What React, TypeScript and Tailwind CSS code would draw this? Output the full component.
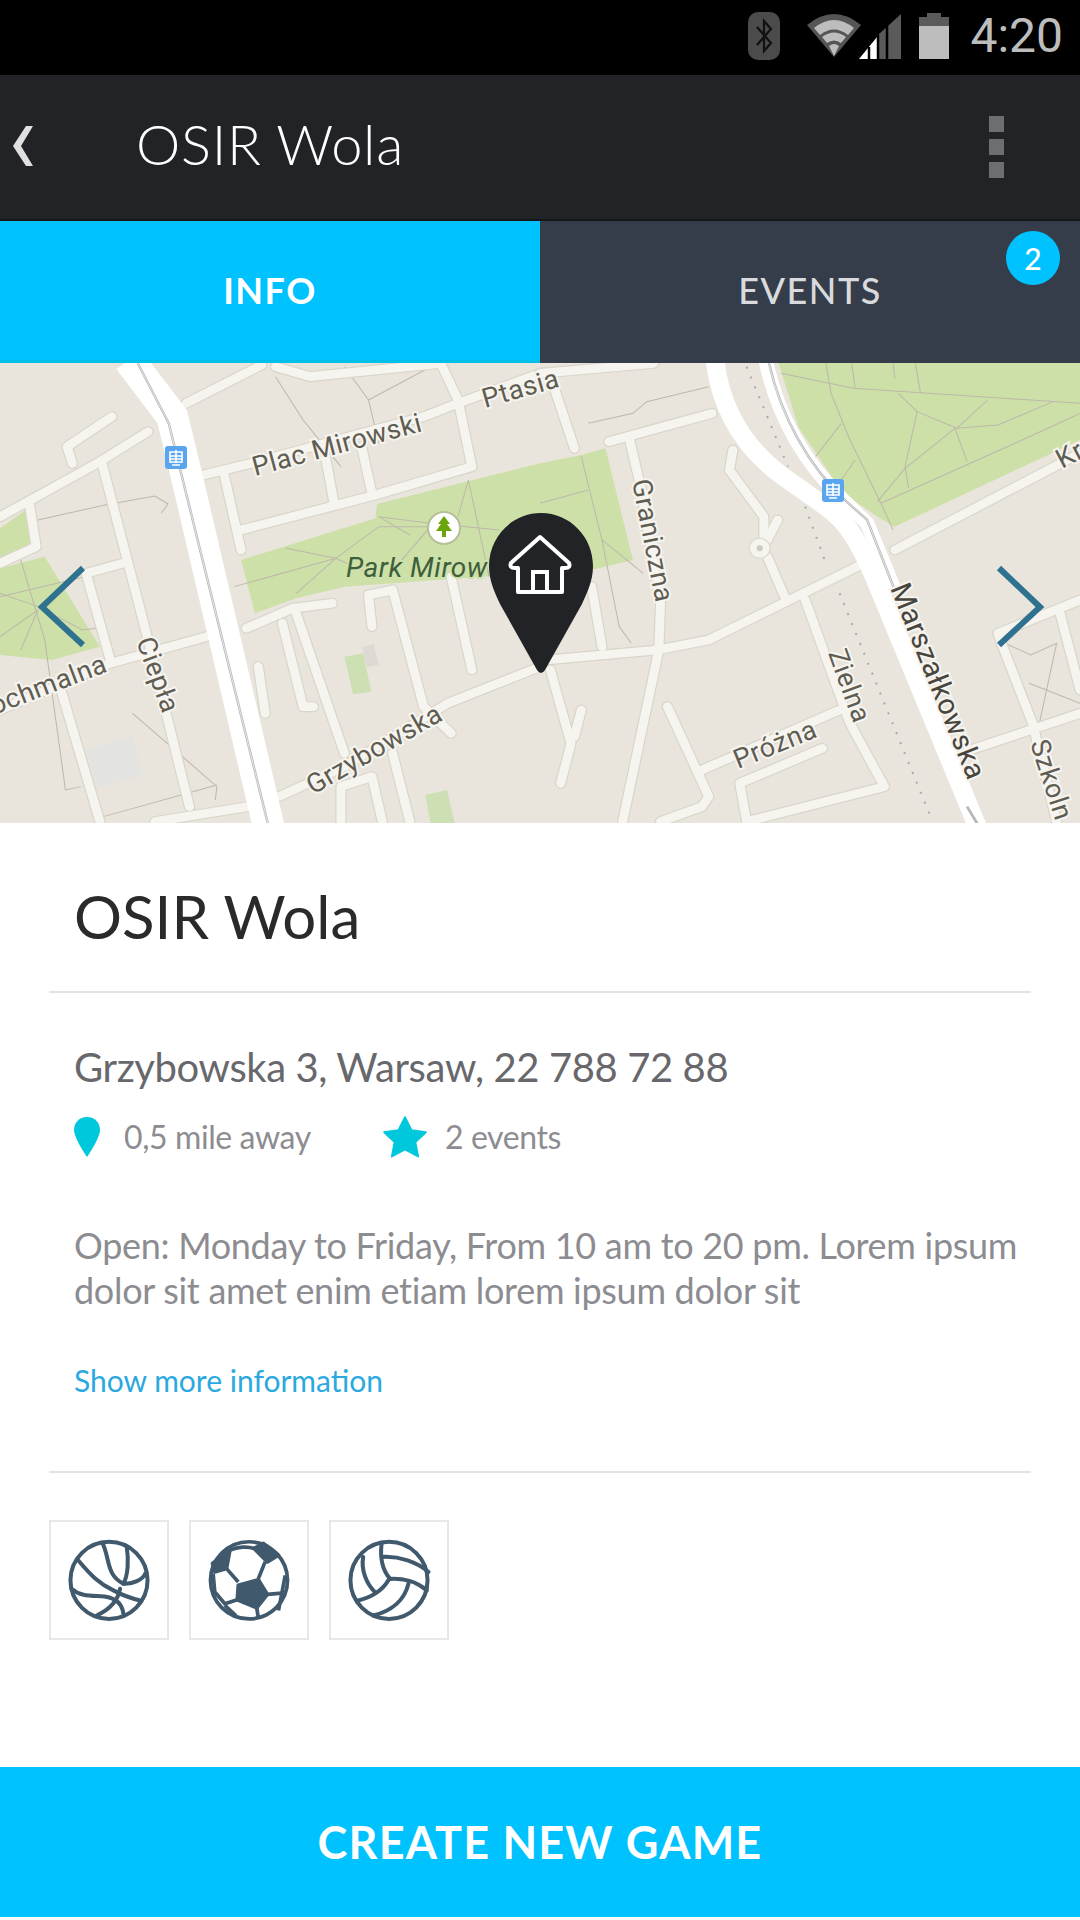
const ROADS_LEFT = [
  "M0 470 L80 425 L290 305 L430 215",
  "M210 310 L195 260 L325 170",
  "M85 430 L105 560 L0 610",
  "M295 305 L420 800 L550 1340",
  "M355 610 L250 640 L320 900",
  "M0 1050 L320 910 L600 830",
  "M180 1000 L290 1385",
  "M540 130 L760 15",
  "M590 345 L730 310 L1230 170 L1330 130 L1568 40",
  "M650 340 L700 570",
  "M700 510 L1090 405 L1370 320 L1330 120 L1280 10",
  "M945 290 L970 430",
  "M1050 260 L1080 400",
  "M715 805 L850 745 L965 730",
  "M820 790 L880 1040 L910 1040",
  "M860 760 L1000 1180",
  "M1080 800 L1070 705 L1140 690 L1230 1040 L1310 1120",
  "M810 1310 L1000 1220 L1300 1030 L1568 920",
  "M750 920 L770 1060",
  "M1140 1180 L1190 1385",
  "M990 1385 L990 1280 L1080 1250 L1110 1385",
  "M450 1385 L720 1340",
  "M1310 650 L1370 930",
  "M800 20 L900 50 L1280 10",
];

const ROADS_RIGHT = [
  "M1030 570 L1568 280",
  "M20 900 L340 870 L490 840 L940 610",
  "M260 240 L290 370 L350 730 L345 870 L240 1385",
  "M200 245 L500 160",
  "M40 80 L100 265",
  "M0 40 L330 10",
  "M560 270 L550 330 L650 470 L650 560",
  "M660 590 L710 710",
  "M690 480 L660 540",
  "M770 720 L900 1090 L1000 1280 L600 1385 L580 1270 L820 1165",
  "M470 1230 L870 1050",
  "M370 1040 L490 1310 L470 1340 L350 1385",
  "M30 930 L90 1150 L60 1270",
  "M120 1050 L100 1130",
  "M1340 850 L1330 820 L1568 720",
  "M1340 850 L1430 1090 L1500 1385",
  "M1250 1170 L1568 1060",
  "M1510 760 L1568 990",
  "M150 680 L180 860",
];

const PATHS_LEFT = [
  "M110 480 L305 435 L450 408 L488 432 L468 460",
  "M0 700 L110 740 L240 810 L280 805",
  "M60 600 L130 840 L190 1290 L235 1280",
  "M0 830 L110 750 L60 870",
  "M0 710 L245 650",
  "M680 680 L975 595 L1100 500 L1240 500",
  "M830 565 L975 595 L1090 650",
  "M860 700 L975 595",
  "M1100 470 L1190 525",
  "M1100 470 L1250 490 L1450 510",
  "M1250 500 L1150 620",
  "M1360 360 L1330 470",
  "M1360 360 L1420 650",
  "M800 50 L880 180 L990 320",
  "M1000 20 L1070 120 L1100 250",
  "M1070 120 L1270 10",
  "M385 1060 L630 1280 L625 1320",
  "M300 1370 L630 1275",
];

const PATHS_RIGHT = [
  "M700 40 L910 85 L1568 130",
  "M845 100 L900 240 L990 430 L1025 510",
  "M830 10 L845 100",
  "M905 10 L915 85",
  "M1025 10 L1030 55",
  "M1090 10 L1105 100",
  "M1040 100 L1095 155 L1210 205 L1330 195 L1490 125",
  "M1095 155 L1060 320 L1070 385",
  "M1205 205 L1060 325 L980 425",
  "M1205 205 L1240 305",
  "M990 430 L1400 240 L1568 160",
  "M875 190 L800 290",
  "M915 300 L875 360",
  "M1300 120 L1210 205",
  "M140 190 L270 160 L310 125 L490 80",
  "M120 290 L180 540 L230 800 L265 850",
  "M0 430 L140 390",
  "M180 540 L300 640",
  "M1350 850 L1425 885 L1500 850 L1450 1090",
  "M1420 970 L1568 1030",
];

function MapTile() {
  const halo = { paintOrder: "stroke" as const };
  return (
    <svg viewBox="0 0 1080 460" className="block w-full h-[460px] bg-[#e9e5dc]">
      {/* left half, coords are from a 2.9x crop */}
      <g transform="scale(0.3444 0.3333) translate(0 -9)">
        <path d="M0 505 L75 450 L105 560 L0 600 Z M0 625 L130 590 L290 860 L150 900 L0 885 Z" fill="#cde0a8" />
        <path d="M700 600 L1090 475 L1095 432 L1568 310 L1568 640 L1400 650 L1000 680 L860 715 L740 760 Z" fill="#cde0a8" />
        <path d="M1000 890 L1055 880 L1078 995 L1025 1003 Z M1235 1305 L1298 1290 L1320 1390 L1250 1390 Z" fill="#cde0b4" />
        <path d="M1052 860 L1085 852 L1100 915 L1065 922 Z" fill="#dedad3" />
        <path d="M250 1170 L385 1130 L412 1245 L280 1285 Z" fill="#e3e3e1" />
        {PATHS_LEFT.map((d) => (
          <path key={d} d={d} fill="none" stroke="#bdb8ab" strokeWidth="3" />
        ))}
        {ROADS_LEFT.map((d) => (
          <path key={d} d={d} fill="none" stroke="#d9d5ca" strokeWidth="33" strokeLinecap="round" strokeLinejoin="round" />
        ))}
        {ROADS_LEFT.map((d) => (
          <path key={d} d={d} fill="none" stroke="#f6f4ef" strokeWidth="26" strokeLinecap="round" strokeLinejoin="round" />
        ))}
        <path d="M375 0 L500 170 L540 340 L780 1400" fill="none" stroke="#ffffff" strokeWidth="92" />
        <path d="M400 10 L490 190 L780 1400" fill="none" stroke="#b6b6b6" strokeWidth="7" />
        <path d="M400 10 L490 190 L780 1400" fill="none" stroke="#efefef" strokeWidth="2.5" />
      </g>

      {/* right half */}
      <g transform="translate(540 0) scale(0.3444 0.3333) translate(0 -9)">
        <path d="M690 0 L1568 0 L1568 240 L1030 500 L980 470 L880 400 L750 200 Z" fill="#cde0a8" />
        <path d="M0 310 L120 285 L190 265 L270 600 L170 625 L0 660 Z" fill="#cde0a8" />
        {PATHS_RIGHT.map((d) => (
          <path key={d} d={d} fill="none" stroke="#bdb8ab" strokeWidth="3" />
        ))}
        <path d="M600 20 L720 320 M770 440 L830 610 M870 700 L1140 1385" fill="none" stroke="#a9abb0" strokeWidth="6" strokeDasharray="6 26" />
        {ROADS_RIGHT.map((d) => (
          <path key={d} d={d} fill="none" stroke="#d9d5ca" strokeWidth="33" strokeLinecap="round" strokeLinejoin="round" />
        ))}
        {ROADS_RIGHT.map((d) => (
          <path key={d} d={d} fill="none" stroke="#f6f4ef" strokeWidth="26" strokeLinecap="round" strokeLinejoin="round" />
        ))}
        <circle cx="638" cy="565" r="30" fill="#f6f4ef" stroke="#d9d5ca" strokeWidth="3" />
        <circle cx="638" cy="565" r="9" fill="#cfcbc0" />
        <path d="M508 0 C525 150 590 260 700 345 L830 440 C900 490 930 560 970 650 L1270 1400" fill="none" stroke="#ffffff" strokeWidth="54" />
        <path d="M655 0 C690 170 770 310 880 420 L950 490 L1030 690" fill="none" stroke="#ffffff" strokeWidth="42" />
        <path d="M665 10 C700 170 780 320 890 425 L950 480 L1030 690" fill="none" stroke="#b6b6b6" strokeWidth="7" />
        <path d="M665 10 C700 170 780 320 890 425 L950 480 L1030 690" fill="none" stroke="#efefef" strokeWidth="2.5" />
        <path d="M1240 1340 L1275 1400" fill="none" stroke="#b6b6b6" strokeWidth="8" />
      </g>

      {/* street labels */}
      <g fontFamily="Roboto, sans-serif" fontSize="27" fill="#5f5c52" stroke="#f6f4ef" strokeWidth="4" letterSpacing="0.5" style={halo}>
        <text transform="translate(255 113) rotate(-15)">Plac Mirowski</text>
        <text transform="translate(485 45) rotate(-16)">Ptasia</text>
        <text transform="translate(-6 352) rotate(-21)">ochmalna</text>
        <text transform="translate(136 278) rotate(70)">Ciepła</text>
        <text transform="translate(313 432) rotate(-30)">Grzybowska</text>
        <text transform="translate(632 118) rotate(79)">Graniczna</text>
        <text transform="translate(828 290) rotate(70)">Zielna</text>
        <text transform="translate(738 406) rotate(-22)">Próżna</text>
        <text transform="translate(1030 380) rotate(72)">Szkoln</text>
        <text transform="translate(1062 106) rotate(-28)">Kr</text>
        <text transform="translate(890 225) rotate(68)" fontSize="29" fill="#47453d">Marszałkowska</text>
        <text x="346" y="214" fontStyle="italic" fontSize="28" fill="#3e5f3c" stroke="#cde0a8">Park Mirow</text>
      </g>

      <BusMarker x={165} y={83} />
      <BusMarker x={822} y={116} />

      <circle cx="444" cy="165" r="16" fill="#ffffff" stroke="#b5bf9a" strokeWidth="2" />
      <path d="M444 153 L450 161 L447 161 L452 168 L446 168 L446 174 L442 174 L442 168 L436 168 L441 161 L438 161 Z" fill="#6aa50e" />

      {/* pin */}
      <path d="M541 150 C570 150 593 174 593 203 C593 218 587 230 582 241 L545 307 Q541 313 537 307 L500 241 C495 230 489 218 489 203 C489 174 512 150 541 150 Z" fill="#222327" />
      <path d="M540 174 L569 200 Q571 205 565 205 L562 205 L562 229 L518 229 L518 205 L515 205 Q509 205 511 200 Z" fill="none" stroke="#ffffff" strokeWidth="4" strokeLinejoin="round" />
      <path d="M533 229 L533 209 L547 209 L547 229" fill="none" stroke="#ffffff" strokeWidth="4" />

      {/* arrows */}
      <path d="M83 205 L42 244 L83 282" fill="none" stroke="#2e728f" strokeWidth="6" />
      <path d="M999 205 L1040 244 L999 282" fill="none" stroke="#2e728f" strokeWidth="6" />
    </svg>
  );
}

function BusMarker({ x, y }: { x: number; y: number }) {
  return (
    <g transform={`translate(${x} ${y})`}>
      <rect width="22" height="23" rx="3" fill="#5aa5f0" />
      <path d="M5 6 H17 V16 H5 Z M5 10 H17 M5 13 H17 M11 4 V17 M7 19 H15" fill="none" stroke="#ffffff" strokeWidth="1.6" />
    </g>
  );
}

function Basketball() {
  return (
    <svg viewBox="6 6 346 346" className="w-full h-full" fill="none" stroke="#40596d" strokeWidth="12" strokeLinecap="round">
      <circle cx="179" cy="180" r="115" />
      <path d="M160 70 C182 115 170 165 222 190 C250 192 280 178 287 160" />
      <path d="M232 80 C238 120 236 165 222 190" />
      <path d="M87 120 C125 165 150 190 192 210 C220 225 250 235 272 240" />
      <path d="M67 205 C95 230 130 225 165 228 C195 232 218 245 222 280" />
      <path d="M142 285 C175 270 205 245 212 205" />
    </svg>
  );
}

function Soccer() {
  return (
    <svg viewBox="6 6 346 346" className="w-full h-full" fill="none" stroke="#40596d" strokeWidth="11" strokeLinejoin="round">
      <circle cx="179" cy="180" r="115" />
      <path d="M147 195 L207 178 L234 222 L202 262 L144 238 Z" fill="#40596d" />
      <path d="M77 155 L70 130 L122 90 L112 145 Z M194 85 L222 70 L267 105 L234 125 Z" fill="#40596d" />
      <path d="M112 145 L147 185 M227 125 L207 175 M234 222 L277 218 L287 165 M144 238 L107 250 L77 215 L72 160 M202 262 L207 292 M107 255 L140 285 M277 218 L267 270 M122 90 C145 80 175 78 194 85" />
    </svg>
  );
}

function Volleyball() {
  return (
    <svg viewBox="6 6 346 346" className="w-full h-full" fill="none" stroke="#40596d" strokeWidth="12" strokeLinecap="round">
      <circle cx="179" cy="180" r="115" />
      <path d="M157 70 C152 110 160 150 182 175" />
      <path d="M162 110 C210 108 262 125 297 155" />
      <path d="M179 176 C220 172 262 185 292 210" />
      <path d="M177 180 C160 210 125 232 87 240" />
      <path d="M237 190 C225 240 185 272 132 285" />
      <path d="M102 110 C95 150 112 190 137 215" />
    </svg>
  );
}

function SportBox({ children }: { children: React.ReactNode }) {
  return <div className="w-[120px] h-[120px] border-2 border-[#e8e8e8]">{children}</div>;
}

export default function App() {
  return (
    <div className="w-[1080px] h-[1920px] bg-white flex flex-col font-[Lato,sans-serif] overflow-hidden">
      {/* status bar */}
      <div className="h-[75px] bg-black flex items-center justify-end pr-[17px] pb-[3px]">
        <svg width="32" height="48" viewBox="0 0 32 48" className="mr-[27px]">
          <rect width="32" height="48" rx="10" fill="#4b4b4b" />
          <path d="M9 15 L23 31 L16 39 L16 9 L23 17 L9 33" fill="none" stroke="#111111" strokeWidth="2.2" />
        </svg>
        <svg width="95" height="46" viewBox="0 0 95 46" className="mr-[17px]">
          <path d="M0 12 Q27 -10 54 12 L27 44 Z" fill="#555555" />
          <path d="M7 15 Q27 -1 47 15 L41 22 Q27 11 13 22 Z" fill="#bdbdbd" />
          <path d="M15 24 Q27 15 39 24 L34 30 Q27 25 20 30 Z" fill="#bdbdbd" />
          <path d="M22 33 Q27 29 32 33 L27 43 Z" fill="#bdbdbd" />
          <path d="M52 46 L70 24 V46 Z" fill="#ffffff" />
          <path d="M72 21 L94 1 V46 H72 Z" fill="#5a5a5a" />
          <path d="M62 34 V46 M71 22 V46 M80 12 V46" stroke="#000000" strokeWidth="2.5" />
        </svg>
        <svg width="30" height="46" viewBox="0 0 30 46" className="mr-[21px]">
          <rect x="8" width="14" height="5" fill="#5a5a5a" />
          <rect y="4" width="30" height="9" fill="#5a5a5a" />
          <rect y="13" width="30" height="33" fill="#bdbdbd" />
        </svg>
        <span className="font-[Roboto,sans-serif] text-[48px] leading-none text-[#bdbdbd]">4:20</span>
      </div>

      {/* toolbar */}
      <div className="h-[146px] bg-[#222327] border-b-2 border-[#15161a] flex items-center shrink-0">
        <svg width="22" height="42" viewBox="0 0 22 42" className="ml-[12px] mt-[-2px]">
          <path d="M21 1 L9 21 L21 41 L14 41 L1 21 L14 1 Z" fill="#e0e0e0" />
        </svg>
        <span className="ml-[102px] mt-[-6px] text-[56px] leading-none font-light text-white tracking-[0.7px]">OSIR Wola</span>
        <div className="ml-auto mr-[76px] flex flex-col gap-[7px]">
          <div className="w-[15px] h-[16px] bg-[#6d6e72]" />
          <div className="w-[15px] h-[16px] bg-[#6d6e72]" />
          <div className="w-[15px] h-[16px] bg-[#6d6e72]" />
        </div>
      </div>

      {/* tabs */}
      <div className="h-[142px] flex shrink-0">
        <div className="w-[540px] bg-[#00c2ff] border-b-[3px] border-[#00bfe8] flex items-center justify-center pb-[2px]">
          <span className="text-[36px] font-bold text-white tracking-[1.5px]">INFO</span>
        </div>
        <div className="w-[540px] bg-[#343d49] relative flex items-center justify-center pb-[4px]">
          <span className="text-[36px] font-medium text-[#d8dadd] tracking-[1.5px]">EVENTS</span>
          <div className="absolute right-[20px] top-[10px] w-[54px] h-[54px] rounded-full bg-[#00c2ff] flex items-center justify-center text-[30px] font-medium text-white">
            2
          </div>
        </div>
      </div>

      <MapTile />

      {/* details */}
      <div className="flex-1 flex flex-col">
        <div className="mx-[49px] h-[170px] border-b-2 border-[#e2e2e2] flex items-center pl-[25px] pt-[17px]">
          <h1 className="text-[60px] leading-none text-[#2a2a2c]">OSIR Wola</h1>
        </div>

        <div className="mx-[49px] pl-[25px] border-b-2 border-[#e2e2e2] h-[480px] flex flex-col">
          <p className="mt-[50px] text-[40px] leading-[48px] text-[#68686c] tracking-[-0.4px]">Grzybowska 3, Warsaw, 22 788 72 88</p>
          <div className="mt-[25px] flex items-center h-[42px] text-[32px] text-[#8c8c91] tracking-[-0.4px]">
            <svg width="26" height="40" viewBox="0 0 26 40" className="mr-[24px]">
              <path d="M13 0 C21 0 26 6 26 13 C26 20 17 34 13 40 C9 34 0 20 0 13 C0 6 5 0 13 0 Z" fill="#00c8dc" />
            </svg>
            <span className="w-[259px]">0,5 mile away</span>
            <svg width="44" height="42" viewBox="0 0 24 23" className="mr-[18px]">
              <path d="M12 .6 L15.6 7.8 L23.4 8.9 L17.7 14.3 L19.2 22.2 L12 18.3 L4.8 22.2 L6.3 14.3 L.6 8.9 L8.4 7.8 Z" fill="#00c8dc" stroke="#00c8dc" strokeWidth="1" strokeLinejoin="round" />
            </svg>
            <span>2 events</span>
          </div>
          <p className="mt-[65px] text-[36px] leading-[45px] text-[#8c8c91] w-[975px] tracking-[-0.3px]">
            Open: Monday to Friday, From 10 am to 20 pm. Lorem ipsum dolor sit amet enim etiam lorem ipsum dolor sit
          </p>
          <a className="mt-[47px] text-[30px] leading-[40px] text-[#2aa9e0]">Show more information</a>
        </div>

        <div className="mx-[49px] mt-[47px] flex gap-[20px]">
          <SportBox><Basketball /></SportBox>
          <SportBox><Soccer /></SportBox>
          <SportBox><Volleyball /></SportBox>
        </div>

        <div className="mt-auto mb-[3px] h-[150px] bg-[#00c2ff] flex items-center justify-center pt-[1px]">
          <span className="text-[45px] font-bold text-white tracking-[1.2px]">CREATE NEW GAME</span>
        </div>
      </div>
    </div>
  );
}
